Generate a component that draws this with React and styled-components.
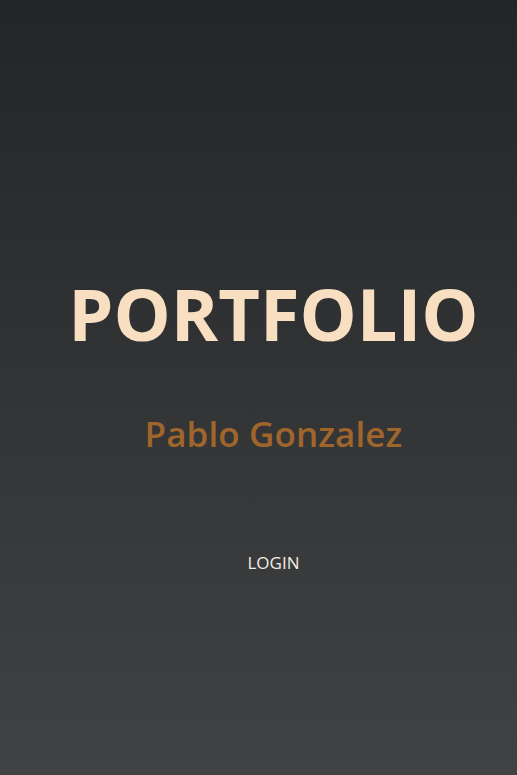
import React from "react";
import styled, { createGlobalStyle } from "styled-components";

const Global = createGlobalStyle`
  html, body { margin: 0; padding: 0; height: 100%; }
  body { font-family: "Open Sans", "Noto Sans", sans-serif; }
  #root { min-height: 100%; }
`;

const Page = styled.main`
  box-sizing: border-box;
  min-height: 775px;
  background: linear-gradient(180deg, #242527 0%, #414244 100%);
  display: flex;
  flex-direction: column;
  align-items: center;
  padding: 265px 0 0 30px;
`;

const Title = styled.h1`
  margin: 0;
  font-size: 72px;
  font-weight: 700;
  color: #f9dfc2;
  line-height: 96px;
  letter-spacing: 0;
`;

const Name = styled.h2`
  margin: 50px 0 0;
  font-size: 35px;
  font-weight: 600;
  color: #a0652b;
  line-height: 46px;
  letter-spacing: 0.1px;
`;

const LoginLink = styled.a`
  margin-top: 94px;
  font-size: 17px;
  color: #f2ece4;
  text-decoration: none;
  cursor: pointer;
`;

export default function App() {
  return (
    <>
      <Global />
      <Page>
        <Title>PORTFOLIO</Title>
        <Name>Pablo Gonzalez</Name>
        <LoginLink>LOGIN</LoginLink>
      </Page>
    </>
  );
}
